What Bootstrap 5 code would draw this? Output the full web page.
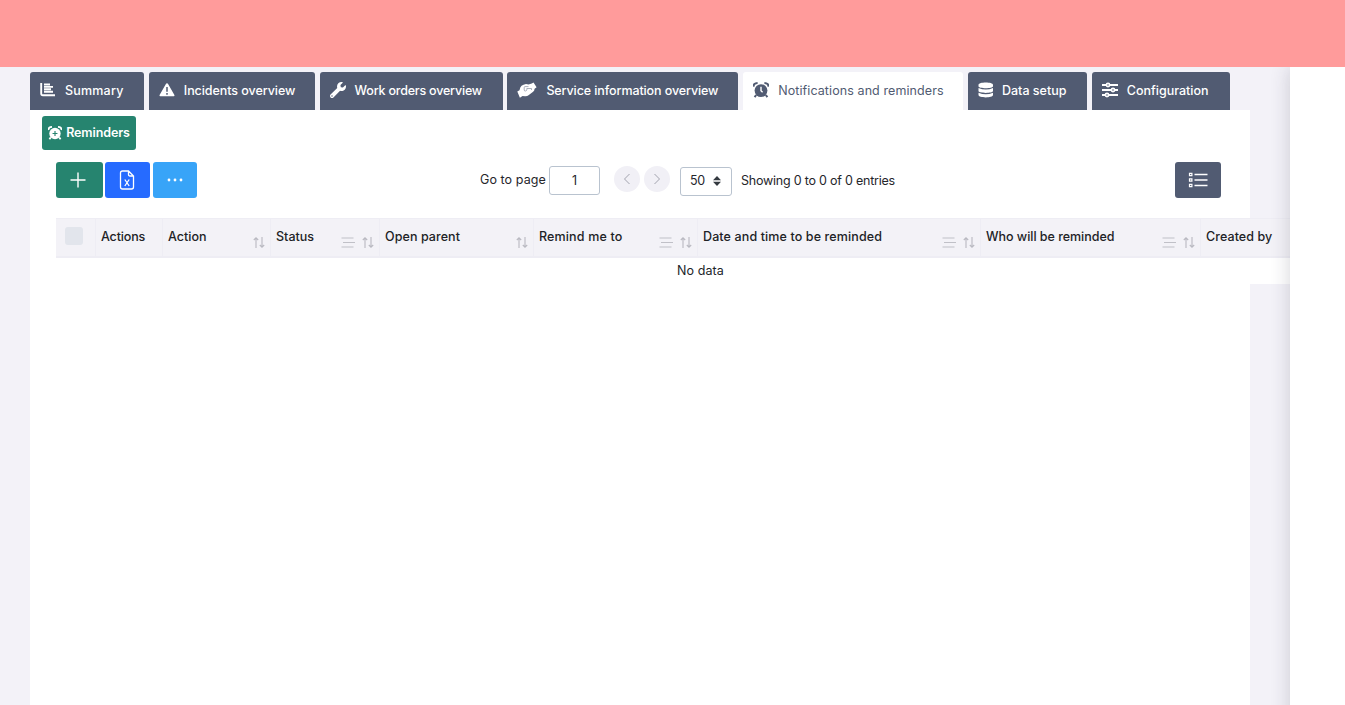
<!DOCTYPE html>
<html lang="en">
<head>
<meta charset="utf-8">
<meta name="viewport" content="width=device-width, initial-scale=1">
<title>Notifications and reminders</title>
<link href="https://cdn.jsdelivr.net/npm/bootstrap@5.3.0/dist/css/bootstrap.min.css" rel="stylesheet">
<style>
body{font-family:"Inter","Liberation Sans",sans-serif;font-size:12.5px;color:#25262b;background:#fff;height:100vh;overflow:hidden;line-height:20px}
.topbar{height:67px;background:#ff9b9b}
.workspace{width:1290px;background:#f3f2f8;padding:5px 40px 0 30px}
.drawer{box-shadow:0 0 20px rgba(40,40,60,.2);background:#fff;margin-bottom:-30px}
.tabs{gap:4.8px;flex-wrap:nowrap}
.tabs .nav-link{height:38px;padding:0 0 0 10px;background:#515b72;color:#fff;font-weight:500;border-radius:3px 3px 0 0;display:flex;align-items:center;white-space:nowrap}
.tabs .nav-link svg{margin:-3px 9px 0 0;flex:none}
.tabs .nav-link.active{background:#fff;color:#515b72;font-weight:400}
.tabs .nav-link:nth-child(1){letter-spacing:.2px}
.tabs .nav-link:nth-child(2){letter-spacing:-.06px}
.tabs .nav-link:nth-child(3){letter-spacing:-.2px}
.tabs .nav-link:nth-child(4){letter-spacing:-.1px}
.tabs .nav-link:nth-child(5){letter-spacing:.09px}
.panel{background:#fff;width:1220px}
.btn-tool{height:36px;padding:0;border:0;border-radius:3px;color:#fff;display:flex;align-items:center;justify-content:center}
.bg-teal{background:#26846f}.bg-azure{background:#266bff}.bg-sky{background:#38a4f8}.bg-slate{background:#515b72}
.btn-rem{width:94px;height:34px;font-weight:600;letter-spacing:-.1px}
.box{border:1px solid #b9c3cf;border-radius:3px;background:#fff;height:29px}
.pg{width:26px;height:26px;border-radius:50%;background:#f1f0f6;color:#a2a3ae;display:flex;align-items:center;justify-content:center}
.entries{letter-spacing:-.22px}
.grid{width:1234px;table-layout:fixed;margin:0}
.grid>thead>tr>th{height:38px;background:#f3f2f7;color:#212226;font-weight:500;padding:0 0 0 5.5px;border:solid #eeedf4;border-width:1px 0 2px 1px;white-space:nowrap;vertical-align:top}
.grid>thead>tr>th:first-child{border-left:0}
.hd{height:34px;align-items:center}
.hd>span{margin-top:1px}
.hd svg{margin-top:12px}
.hd .filt{margin-right:7px}
.hd .sort{margin-right:5px}
.grid>tbody>tr>td{background:#fff;border:0;height:27px;padding:3px 0}
.chk{width:18px;height:18px;border-radius:3px;background:#e2e5ec;margin:-1px 0 0 3.5px}
</style>
</head>
<body class="d-flex flex-column">
<svg class="d-none">
<symbol id="sort" viewBox="0 0 12 13"><path d="M3 12V2M.8 4 3 1.800 5.200 4M9 1v10M6.800 9 9 11.200 11.200 9" fill="none" stroke="#b9b9c1" stroke-width="1.100"/></symbol>
<symbol id="filt" viewBox="0 0 14 11"><path d="M.5 1h12M2 5.500h12M.5 10h12" fill="none" stroke="#c0c0c7" stroke-width="1.100"/></symbol>
</svg>
<header class="topbar flex-shrink-0"></header>
<div class="d-flex flex-grow-1 overflow-hidden">
<main class="workspace flex-shrink-0 d-flex flex-column">
<nav class="nav tabs">
<a class="nav-link" style="width:114px"><svg width="16" height="16" viewBox="0 0 16 16"><path d="M1.200 1v10.500q0 1.800 1.800 1.800h12M4 2.500h6M4 4.900h9M4 7.300h7M4 9.700h9" fill="none" stroke="#fff" stroke-width="1.900"/></svg><span>Summary</span></a>
<a class="nav-link" style="width:166px"><svg width="16" height="16" viewBox="0 0 16 16"><path d="M8 1.200q.7 0 1.100.7l6.300 11q.5 1.300-.8 1.400H1.400Q.1 14.200.6 12.900l6.300-11Q7.300 1.200 8 1.200z" fill="#fff"/><path d="M8 5v4.700M8 11v1.700" stroke="#515b72" stroke-width="1.500"/></svg><span>Incidents overview</span></a>
<a class="nav-link" style="width:183px"><svg width="16" height="16" viewBox="0 0 512 512"><path fill="#fff" d="M507.700 109.100c-2.200-9-13.500-12.100-20.100-5.500l-74.400 74.400-67.900-11.300L334 98.900l74.400-74.400c6.600-6.600 3.400-17.900-5.700-20.200-47.400-11.700-99.600.9-136.600 37.900-39.600 39.600-50.500 97.100-34.100 147.200L18.700 402.800c-25 25-25 65.500 0 90.500s65.500 25 90.500 0l213.200-213.200c50.100 16.700 107.500 5.700 147.400-34.200 37.100-37.100 49.700-89.300 37.900-136.800zM64 472a24 24 0 1 1 0-48 24 24 0 0 1 0 48z"/></svg><span>Work orders overview</span></a>
<a class="nav-link" style="width:231px"><svg width="20" height="16" viewBox="0 0 20 16"><path d="M.3 9.500 2.500 8.200 3.300 5.500Q4.200 3.400 6.500 2.700L9 1.900 11.500 2.500 14.800 1.600 16.500.4 19.600 5.300 17.600 6.800Q17.500 9 15.800 10L11.500 13.200Q10.300 14.300 8 14.200L5.500 14.100 2.900 15.800z" fill="#fff"/><path d="M11.500 4.600H8Q7.200 4.600 7.200 5.500V8q.1 1.200 1.300 1t1.300-1.200V6.500h4.700V8" fill="none" stroke="#8a91a2" stroke-width=".7"/></svg><span>Service information overview</span></a>
<a class="nav-link active" style="width:220px"><svg width="16" height="16" viewBox="0 0 16 16"><path d="M.8 4.600Q.2 1.200 4.600 1M15.200 4.600Q15.800 1.200 11.400 1M3.200 13l-1.600 2.200M12.800 13l1.600 2.200" fill="none" stroke="#515b72" stroke-width="2"/><circle cx="8" cy="8.600" r="6.400" fill="#515b72"/><path d="M8 4.800v4l1.600 1.500" fill="none" stroke="#fff" stroke-width="1.400"/></svg><span>Notifications and reminders</span></a>
<a class="nav-link" style="width:119px"><svg style="margin-right:8px" width="16" height="16" viewBox="0 0 16 16"><path d="M.5 3C.5-.2 15-.2 15 3v1.200c0 2.600-14.500 2.600-14.500 0zM.5 6q7.300 3 14.500 0v3c0 2.500-14.500 2.500-14.500 0zM.5 10.800q7.300 3 14.500 0V13c0 3.200-14.500 3.200-14.500 0z" fill="#fff"/></svg><span>Data setup</span></a>
<a class="nav-link" style="width:138px"><svg width="16" height="16" viewBox="0 0 16 16"><path d="M0 3h16M0 8h16M0 13h16" stroke="#fff" stroke-width="2.100"/><g fill="#515b72" stroke="#fff" stroke-width="1.600"><circle cx="6" cy="3" r="1.600"/><circle cx="11" cy="8" r="1.600"/><circle cx="5" cy="13" r="1.600"/></g></svg><span>Configuration</span></a>
</nav>
<section class="panel flex-grow-1">
<div style="padding:6px 0 0 12px"><button class="btn-tool btn-rem bg-teal"><svg class="me-1" width="14" height="14" viewBox="0 0 16 16"><path d="M.8 4.600Q.2 1.200 4.600 1M15.200 4.600Q15.800 1.200 11.400 1M3.200 13l-1.600 2.200M12.800 13l1.600 2.200" fill="none" stroke="#fff" stroke-width="2"/><circle cx="8" cy="8.600" r="6.500" fill="#fff"/><path d="M8 5.800v5.600M5.200 8.600h5.600" stroke="#26846f" stroke-width="1.300"/></svg><span>Reminders</span></button></div>
<div class="d-flex align-items-center" style="padding:12px 29px 0 26px">
<button class="btn-tool bg-teal" style="width:47px;margin-right:2px;padding-right:3px"><svg width="16" height="16" viewBox="0 0 16 16"><path d="M8 .5v15M.5 8h15" stroke="#fff" stroke-width="1.400"/></svg></button>
<button class="btn-tool bg-azure" style="width:45px;margin-right:3px;padding-right:2px"><svg width="16" height="20" viewBox="0 0 16 20"><path d="M9.500 1H3.500Q1.500 1 1.500 3v14q0 2 2 2h9q2 0 2-2V6zM9.500 1v3.500q0 1.500 1.500 1.500h3.500M5.800 9.500l4.400 6.500M10.200 9.500l-4.400 6.500" fill="none" stroke="#fff" stroke-width="1.300"/></svg></button>
<button class="btn-tool bg-sky" style="width:44px"><svg width="16" height="4" viewBox="0 0 16 4"><g fill="#fff"><circle cx="2" cy="2" r="1.400"/><circle cx="8" cy="2" r="1.400"/><circle cx="14" cy="2" r="1.400"/></g></svg></button>
<span class="text-nowrap" style="margin-left:283px;width:69px;letter-spacing:.08px">Go to page</span>
<span class="box text-center" style="width:51px;padding-top:4px">1</span>
<span class="pg" style="margin:-2px 4px 0 14px"><svg width="8" height="12" viewBox="0 0 8 12"><path d="M6.500 1 1.500 6l5 5" fill="none" stroke="currentColor"/></svg></span>
<span class="pg" style="margin-top:-2px"><svg width="8" height="12" viewBox="0 0 8 12"><path d="m1.500 1 5 5-5 5" fill="none" stroke="currentColor"/></svg></span>
<span class="box d-flex align-items-center justify-content-between" style="width:52px;margin:2px 9px 0 10px;padding:0 10px 0 9px;letter-spacing:-.3px">50<svg width="8" height="10" viewBox="0 0 8 10"><path d="M4 0l4 4.200H0zM4 10 0 5.800h8z" fill="#343a40"/></svg></span>
<span class="text-nowrap entries" style="margin-top:2px">Showing 0 to 0 of 0 entries</span>
<button class="btn-tool bg-slate ms-auto" style="width:46px"><svg width="20" height="16" viewBox="0 0 20 16"><path d="M6.500 2.500H19.500M6.500 8H19.500M6.500 13.500H19.500" stroke="#fff" stroke-width="1.400"/><path d="M1.500 1.300h2.400v2.400H1.500zM1.500 6.800h2.400v2.400H1.500zM1.500 12.300h2.400v2.400H1.500z" fill="none" stroke="#fff" stroke-width="1.200"/></svg></button>
</div>
<div style="padding:20px 0 0 26px">
<table class="table grid">
<colgroup><col style="width:39px"><col style="width:67px"><col style="width:108px"><col style="width:109px"><col style="width:154px"><col style="width:164px"><col style="width:283px"><col style="width:220px"><col style="width:90px"></colgroup>
<thead><tr>
<th><div class="hd d-flex"><div class="chk"></div></div></th>
<th><div class="hd d-flex"><span style="letter-spacing:-.15px">Actions</span></div></th>
<th><div class="hd d-flex"><span class="me-auto">Action</span><svg class="sort" width="12" height="13"><use href="#sort"/></svg></div></th>
<th><div class="hd d-flex"><span class="me-auto">Status</span><svg class="filt" width="14" height="11"><use href="#filt"/></svg><svg class="sort" width="12" height="13"><use href="#sort"/></svg></div></th>
<th><div class="hd d-flex"><span class="me-auto" style="letter-spacing:.08px">Open parent</span><svg class="sort" width="12" height="13"><use href="#sort"/></svg></div></th>
<th><div class="hd d-flex"><span class="me-auto" style="letter-spacing:.15px">Remind me to</span><svg class="filt" width="14" height="11"><use href="#filt"/></svg><svg class="sort" width="12" height="13"><use href="#sort"/></svg></div></th>
<th><div class="hd d-flex"><span class="me-auto" style="letter-spacing:.12px">Date and time to be reminded</span><svg class="filt" width="14" height="11"><use href="#filt"/></svg><svg class="sort" width="12" height="13"><use href="#sort"/></svg></div></th>
<th><div class="hd d-flex"><span class="me-auto" style="letter-spacing:-.03px">Who will be reminded</span><svg class="filt" width="14" height="11"><use href="#filt"/></svg><svg class="sort" width="12" height="13"><use href="#sort"/></svg></div></th>
<th><div class="hd d-flex"><span style="letter-spacing:.08px">Created by</span></div></th>
</tr></thead>
<tbody><tr><td colspan="9"><span style="margin-left:621px;letter-spacing:.1px">No data</span></td></tr></tbody>
</table>
</div>
</section>
</main>
<aside class="drawer flex-grow-1"></aside>
</div>
<script src="https://cdn.jsdelivr.net/npm/bootstrap@5.3.0/dist/js/bootstrap.bundle.min.js"></script>
</body>
</html>
